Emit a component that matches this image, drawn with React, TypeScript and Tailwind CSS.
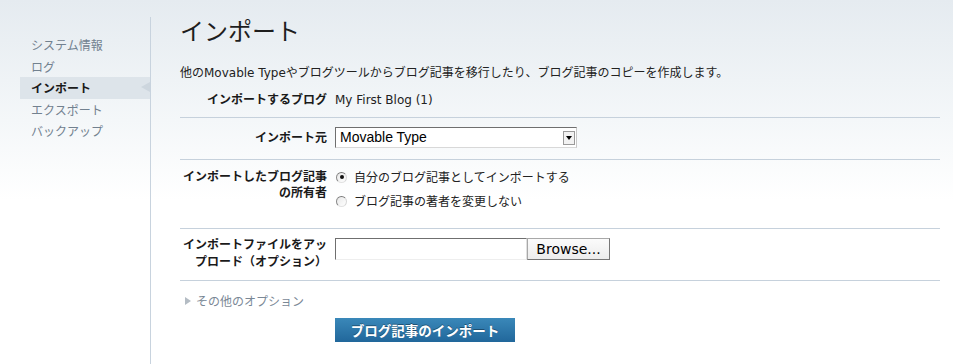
import React from 'react';

const navItems = ['システム情報', 'ログ', 'インポート', 'エクスポート', 'バックアップ'];

const Radio = ({ checked }: { checked?: boolean }) => (
  <span className="relative inline-block w-[11px] h-[11px] rounded-full border border-t-[#7a7a7a] border-l-[#8a8a8a] border-r-[#d6d6d6] border-b-[#e2e2e2] bg-[linear-gradient(135deg,#e8e8e8,#ffffff)]">
    {checked && <span className="absolute left-[2.5px] top-[2.5px] w-[4px] h-[4px] rounded-full bg-[#111]" />}
  </span>
);

const Label = ({ children }: { children: React.ReactNode }) => (
  <div className="w-[147px] shrink-0 text-right font-bold text-[12px] text-[#1a1a1a]">{children}</div>
);

export default function App() {
  return (
    <div className="flex h-[364px] overflow-hidden bg-[linear-gradient(to_bottom,#e5ebf0_0px,#f4f7f9_120px,#ffffff_200px)] font-['DejaVu_Sans','Noto_Sans_CJK_JP',sans-serif] text-[12px] text-[#222]">
      {/* Sidebar */}
      <div className="w-[151px] shrink-0 pt-[17px]">
        <div className="relative h-full border-r border-[#c8d3de] pt-[17px]">
          <ul className="ml-[20px]">
            {navItems.map((item) => {
              const active = item === 'インポート';
              return (
                <li
                  key={item}
                  className={`relative h-[21.5px] leading-[21.5px] pl-[11px] font-['Noto_Sans_CJK_JP',sans-serif] ${
                    active ? 'bg-[#dde4ea] font-bold text-[#1a1a1a]' : 'text-[#72818f]'
                  }`}
                >
                  {item}
                  {active && (
                    <span className="absolute right-0 top-[5px] w-0 h-0 border-y-[5.5px] border-y-transparent border-r-[9px] border-r-[#cdd6de]" />
                  )}
                </li>
              );
            })}
          </ul>
        </div>
      </div>

      {/* Main */}
      <div className="flex-1 pl-[29px] pr-[13px] pt-[16px]">
        <h1 className="text-[24px] leading-[28px] text-[#1e1e1e] font-['Noto_Sans_CJK_JP',sans-serif]">インポート</h1>
        <p className="mt-[20px] leading-[18px]">他のMovable Typeやブログツールからブログ記事を移行したり、ブログ記事のコピーを作成します。</p>

        <div className="mt-[9px] flex gap-[8px] pb-[8px] border-b border-[#c6d1dc] leading-[18px]">
          <Label>インポートするブログ</Label>
          <div>My First Blog (1)</div>
        </div>

        <div className="flex items-center gap-[8px] pt-[9px] pb-[11px] border-b border-[#c6d1dc]">
          <Label>インポート元</Label>
          <div className="flex items-center w-[242px] h-[21px] bg-white border border-t-[#6f6f6f] border-l-[#6f6f6f] border-r-[#c8c8c8] border-b-[#d8d8d8] pl-[4px] pr-[1px]">
            <span className="flex-1 font-['Liberation_Sans',sans-serif] text-[14px] text-black">Movable Type</span>
            <span className="flex items-center justify-center w-[12px] h-[14px] border border-[#9a9a9a] bg-[#f2f2f2]">
              <span className="w-0 h-0 border-x-[3px] border-x-transparent border-t-[4px] border-t-black" />
            </span>
          </div>
        </div>

        <div className="flex items-start gap-[8px] pt-[5px] pb-[15px] border-b border-[#c6d1dc]">
          <div className="pt-[4px] leading-[16px]">
            <Label>
              インポートしたブログ記事
              <br />
              の所有者
            </Label>
          </div>
          <div className="font-['Noto_Sans_CJK_JP',sans-serif]">
            <div className="flex items-center gap-[7px] h-[24px] pl-[1px]">
              <Radio checked />
              <span>自分のブログ記事としてインポートする</span>
            </div>
            <div className="flex items-center gap-[7px] h-[24px] pl-[1px]">
              <Radio />
              <span>ブログ記事の著者を変更しない</span>
            </div>
          </div>
        </div>

        <div className="flex items-start gap-[8px] pb-[9px] border-b border-[#c6d1dc]">
          <div className="pt-[8px] leading-[17px]">
            <Label>
              インポートファイルをアッ
              <br />
              プロード（オプション）
            </Label>
          </div>
          <div className="flex pt-[9px]">
            <div className="w-[192px] h-[22px] bg-white border border-t-[#6f6f6f] border-l-[#6f6f6f] border-r-[#e0e0e0] border-b-[#eeeeee]" />
            <button className="w-[83px] h-[22px] border border-[#a8a8a8] border-r-[#777] border-b-[#777] bg-[linear-gradient(to_bottom,#fbfbfb,#ececec)] text-[14px] text-black font-['DejaVu_Sans',sans-serif] leading-[20px]">
              Browse...
            </button>
          </div>
        </div>

        <div className="mt-[11px] flex items-center gap-[5px] pl-[5px] leading-[18px] text-[#7a8896] font-['Noto_Sans_CJK_JP',sans-serif]">
          <span className="w-0 h-0 border-y-[4px] border-y-transparent border-l-[6px] border-l-[#b4bcc4]" />
          <span>その他のオプション</span>
        </div>

        <div className="mt-[8px] pl-[155px]">
          <button className="w-[180px] h-[24px] bg-[linear-gradient(to_bottom,#3a88b9,#21679b)] text-white font-bold text-[13.5px] leading-[24px] font-['Noto_Sans_CJK_JP',sans-serif] [text-shadow:0_-1px_0_rgba(0,0,0,0.35)]">
            ブログ記事のインポート
          </button>
        </div>
      </div>
    </div>
  );
}
